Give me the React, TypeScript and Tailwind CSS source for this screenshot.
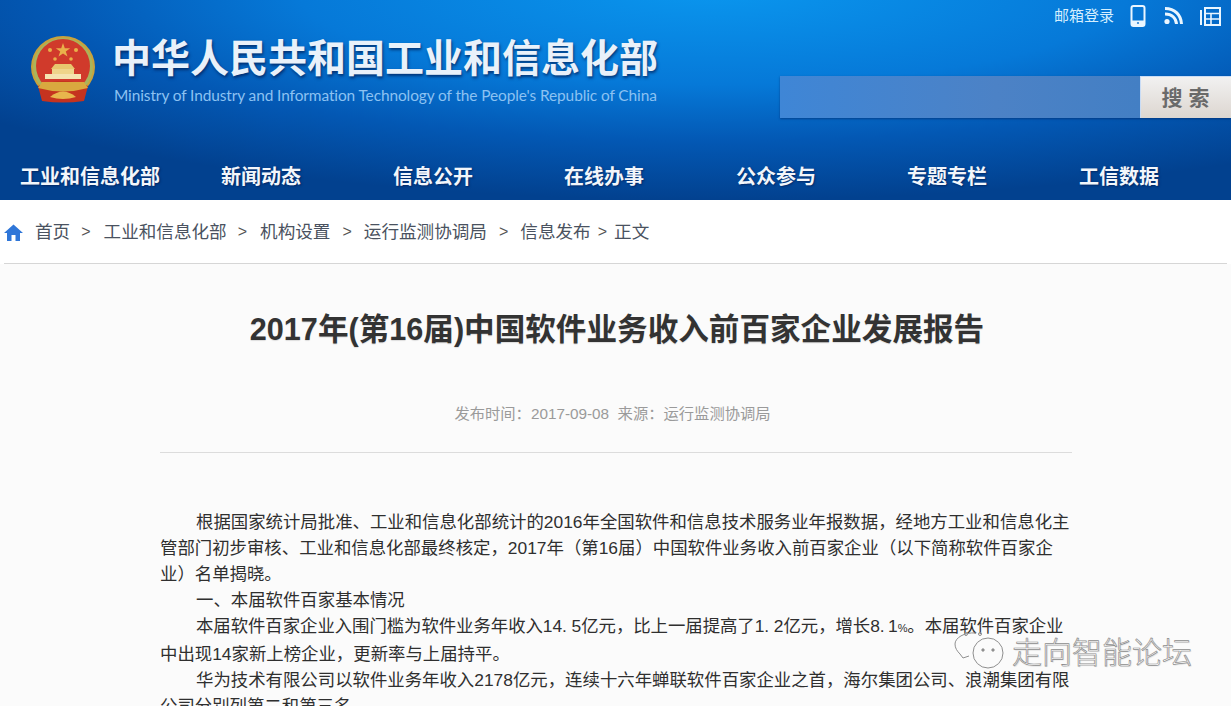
import type { ReactNode } from "react";

const cjk = "font-['Liberation_Sans','Noto_Sans_CJK_SC',sans-serif]";

function Emblem() {
  return (
    <svg width="66" height="68" viewBox="0 0 66 68" className="shrink-0">
      <ellipse cx="33" cy="31" rx="32" ry="31" fill="#c9a23c" />
      <ellipse cx="33" cy="31" rx="30" ry="29" fill="#a9b45c" />
      <ellipse cx="33" cy="30" rx="27" ry="27" fill="#d03a2b" />
      <path d="M8 50 Q33 40 58 50 L54 65 Q33 68 12 65 Z" fill="#c5331f" />
      <path d="M12 46 L54 46 L58 52 Q33 59 8 52 Z" fill="#d9a93f" />
      <rect x="22" y="33" width="22" height="5" fill="#efd48a" />
      <rect x="15" y="38" width="36" height="5" fill="#f5e3b0" />
      <path d="M25 28 H41 L45 33 H21 Z" fill="#e8c66e" />
      <path d="M20 61 Q33 50 46 61 Q33 65 20 61 Z" fill="#e8b64c" />
      <path d="M33 7 l1.8 5.2 5.4 0 -4.4 3.2 1.7 5.2 -4.5 -3.2 -4.5 3.2 1.7 -5.2 -4.4 -3.2 5.4 0 Z" fill="#e9b04a" />
      <circle cx="20" cy="14" r="2" fill="#e9b04a" />
      <circle cx="46" cy="14" r="2" fill="#e9b04a" />
      <circle cx="25" cy="23" r="1.8" fill="#e9b04a" />
      <circle cx="41" cy="23" r="1.8" fill="#e9b04a" />
    </svg>
  );
}

function HeaderIcons() {
  return (
    <div className="flex items-center gap-[17px]">
      <svg width="16" height="22" viewBox="0 0 16 22">
        <rect x="1.5" y="1" width="13" height="20" rx="2" fill="none" stroke="#eaf6ff" strokeWidth="2" />
        <rect x="1.5" y="15.5" width="13" height="5.5" fill="#eaf6ff" />
        <circle cx="8" cy="18" r="1.1" fill="#2a7fd0" />
      </svg>
      <svg width="20" height="18" viewBox="0 0 20 18">
        <circle cx="4" cy="14.5" r="2.6" fill="#eaf6ff" />
        <path d="M2 7 C9 7 13 11 13.5 17" fill="none" stroke="#eaf6ff" strokeWidth="3" />
        <path d="M2 1.5 C12 1.5 18 8 18.5 17" fill="none" stroke="#eaf6ff" strokeWidth="3" />
      </svg>
      <svg width="21" height="19" viewBox="0 0 21 19">
        <path d="M1 3 V18" stroke="#eaf6ff" strokeWidth="2" />
        <rect x="5" y="1" width="15" height="17" fill="none" stroke="#eaf6ff" strokeWidth="2" />
        <path d="M5 6.5 H20 M5 12 H20 M11 6.5 V18" stroke="#eaf6ff" strokeWidth="1.6" />
      </svg>
    </div>
  );
}

function Header() {
  const nav = [
    ["工业和信息化部", "w-[201px]"],
    ["新闻动态", "w-[172px]"],
    ["信息公开", "w-[171px]"],
    ["在线办事", "w-[172px]"],
    ["公众参与", "w-[171px]"],
    ["专题专栏", "w-[172px]"],
    ["工信数据", "w-[100px]"],
  ];
  return (
    <header className="h-[200px] bg-[radial-gradient(ellipse_75%_105%_at_58%_-5%,#0a96ee_0%,#0679d8_45%,#0358b4_72%,#02418f_100%)] flex flex-col">
      <div className="h-[151px] flex justify-between">
        <div className="flex pl-[30px] pt-[36px] gap-[16px]">
          <Emblem />
          <div className="flex flex-col">
            <div className="text-[39px] leading-[46px] font-bold text-[#e9f1fa] whitespace-nowrap [text-shadow:1px_2px_3px_rgba(0,25,80,0.7)]">
              中华人民共和国工业和信息化部
            </div>
            <div className="mt-[3px] text-[15.45px] leading-[20px] text-[#8cc2f2] whitespace-nowrap font-['Lato',sans-serif] tracking-[-0.1px] pl-[2px]">
              Ministry of Industry and Information Technology of the People's Republic of China
            </div>
          </div>
        </div>
        <div className="flex flex-col items-end w-[451px]">
          <div className="flex items-center h-[18px] mt-[7px] pr-[10px]">
            <span className="text-[15px] text-[#d5efff] mr-[16px] whitespace-nowrap">邮箱登录</span>
            <HeaderIcons />
          </div>
          <div className="flex mt-[51px] h-[42px] w-[451px] shadow-[0_1px_2px_rgba(0,30,90,0.5)]">
            <div className="flex-1 bg-[linear-gradient(90deg,#3f86d6,#4c82c6_60%,#437fc4)]" />
            <div className="w-[91px] pl-[5px] bg-[linear-gradient(180deg,#f1f1f1,#ddd6d0)] border-l border-t border-[#c9dcf5] flex items-center justify-center text-[21px] font-bold tracking-[6px] text-[#6a6a6a]">
              搜索
            </div>
          </div>
        </div>
      </div>
      <nav className="flex pl-[20px] pt-[12px]">
        {nav.map(([t, w]) => (
          <div key={t} className={`${w} shrink-0 text-[20px] leading-[28px] font-bold text-[#f2f6fb] whitespace-nowrap [text-shadow:1px_1px_2px_rgba(0,20,70,0.6)]`}>
            {t}
          </div>
        ))}
      </nav>
    </header>
  );
}

function Breadcrumb() {
  const Sep = ({ c }: { c: string }) => <span className={`${c} text-[16px] text-[#555]`}>&gt;</span>;
  return (
    <div className="h-[64px] mx-[4px] border-b border-[#d6d6d6] flex items-center pt-[1px] text-[17.6px] text-[#4a5260] whitespace-nowrap bg-white">
      <svg width="19" height="17" viewBox="0 0 19 17" className="mr-[12px]">
        <path d="M9.5 0.5 L19 9 H16 V17 H11.5 V11 H7.5 V17 H3 V9 H0 Z" fill="#2f76d8" />
      </svg>
      <span>首页</span>
      <Sep c="ml-[11px] mr-[13px]" />
      <span>工业和信息化部</span>
      <Sep c="ml-[11px] mr-[13px]" />
      <span>机构设置</span>
      <Sep c="ml-[12px] mr-[12px]" />
      <span>运行监测协调局</span>
      <Sep c="mx-[12px]" />
      <span>信息发布</span>
      <Sep c="ml-[7px] mr-[7px]" />
      <span>正文</span>
    </div>
  );
}

function Article() {
  const lines: [ReactNode, boolean, string][] = [
    ["根据国家统计局批准、工业和信息化部统计的2016年全国软件和信息技术服务业年报数据，经地方工业和信息化主", true, ""],
    ["管部门初步审核、工业和信息化部最终核定，2017年（第16届）中国软件业务收入前百家企业（以下简称软件百家企", false, ""],
    ["业）名单揭晓。", false, ""],
    ["一、本届软件百家基本情况", true, ""],
    [<>本届软件百家企业入围门槛为软件业务年收入14. 5亿元，比上一届提高了1. 2亿元，增长8.&thinsp;1<span className="text-[11px]">%</span>。本届软件百家企业</>, true, "tracking-[-0.05px]"],
    ["中出现14家新上榜企业，更新率与上届持平。", false, ""],
    ["华为技术有限公司以软件业务年收入2178亿元，连续十六年蝉联软件百家企业之首，海尔集团公司、浪潮集团有限", true, ""],
    ["公司分别列第二和第三名。", false, ""],
  ];
  return (
    <main className="bg-[#fbfbfb] h-[442px] overflow-hidden">
      <h1 className="pt-[45px] pl-[3px] text-center text-[30.6px] leading-[40px] font-bold text-[#333] [text-shadow:0_1px_1px_rgba(0,0,0,0.12)]">
        2017年(第16届)中国软件业务收入前百家企业发展报告
      </h1>
      <div className="mt-[55px] text-center text-[15.3px] leading-[20px] text-[#9a9a9a] pr-[6px]">
        发布时间：2017-09-08&nbsp;&nbsp;来源：运行监测协调局
      </div>
      <div className="mx-[160px] mt-[28px] w-[912px] border-t border-[#dcdcdc]" />
      <div className="ml-[160px] w-[912px] mt-[56px] text-[17.4px] leading-[26px] text-[#2f2f2f]">
        {lines.map(([t, ind, extra], i) => (
          <div key={i} className={`whitespace-nowrap ${ind ? "pl-[36px]" : ""} ${extra}`}>{t}</div>
        ))}
      </div>
    </main>
  );
}

function Watermark() {
  return (
    <div className="absolute left-[954px] top-[630px] flex items-center gap-[8px] pointer-events-none">
      <svg width="50" height="40" viewBox="0 0 50 40" fill="none" stroke="#8f8f8f" strokeWidth="1">
        <path d="M22 3 C10 2 1 8 1 14 C1 18 3 21 6 24 L9 28 L15 26" />
        <circle cx="34" cy="23" r="15" fill="#fbfbfb" />
        <circle cx="29" cy="20" r="1.2" fill="#8f8f8f" />
        <circle cx="39" cy="20" r="1.2" fill="#8f8f8f" />
        <circle cx="12" cy="4" r="1.5" />
        <circle cx="26" cy="4" r="1.5" />
      </svg>
      <span className="text-[30px] leading-[36px] font-light text-[#ffffff] whitespace-nowrap [-webkit-text-stroke:0.7px_#8c8c8c] [text-shadow:1px_1px_1px_rgba(0,0,0,0.12)] font-['Noto_Sans_CJK_SC',sans-serif]">
        走向智能论坛
      </span>
    </div>
  );
}

export default function App() {
  return (
    <div className={`relative w-[1231px] h-[706px] overflow-hidden bg-white ${cjk}`}>
      <Header />
      <Breadcrumb />
      <Article />
      <Watermark />
    </div>
  );
}
